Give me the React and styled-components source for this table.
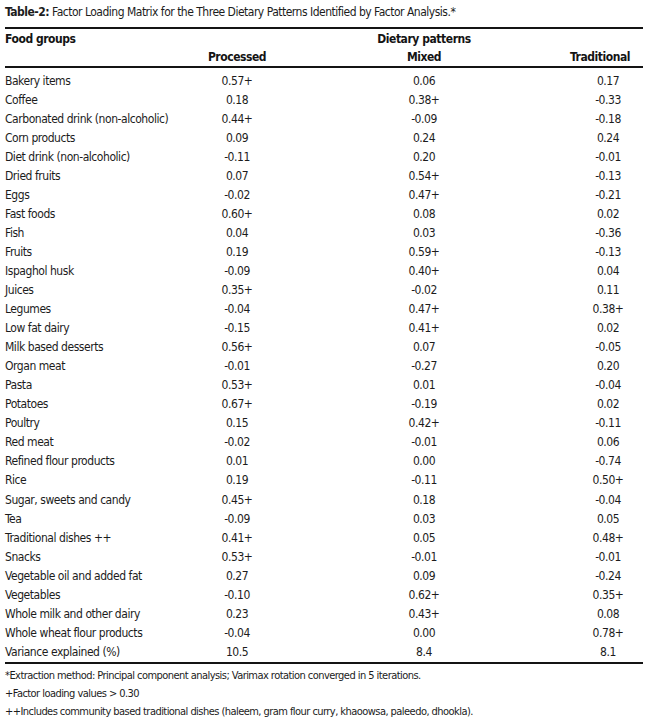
import React from 'react';
import styled, { createGlobalStyle } from 'styled-components';

const GlobalStyle = createGlobalStyle`
  html, body {
    margin: 0;
    padding: 0;
    background: #ffffff;
  }
  body {
    font-family: "DejaVu Sans Condensed", "Liberation Sans", sans-serif;
    color: #1c1c1c;
  }
`;

const rows = [
  ['Bakery items', '0.57+', '0.06', '0.17'],
  ['Coffee', '0.18', '0.38+', '-0.33'],
  ['Carbonated drink (non-alcoholic)', '0.44+', '-0.09', '-0.18'],
  ['Corn products', '0.09', '0.24', '0.24'],
  ['Diet drink (non-alcoholic)', '-0.11', '0.20', '-0.01'],
  ['Dried fruits', '0.07', '0.54+', '-0.13'],
  ['Eggs', '-0.02', '0.47+', '-0.21'],
  ['Fast foods', '0.60+', '0.08', '0.02'],
  ['Fish', '0.04', '0.03', '-0.36'],
  ['Fruits', '0.19', '0.59+', '-0.13'],
  ['Ispaghol husk', '-0.09', '0.40+', '0.04'],
  ['Juices', '0.35+', '-0.02', '0.11'],
  ['Legumes', '-0.04', '0.47+', '0.38+'],
  ['Low fat dairy', '-0.15', '0.41+', '0.02'],
  ['Milk based desserts', '0.56+', '0.07', '-0.05'],
  ['Organ meat', '-0.01', '-0.27', '0.20'],
  ['Pasta', '0.53+', '0.01', '-0.04'],
  ['Potatoes', '0.67+', '-0.19', '0.02'],
  ['Poultry', '0.15', '0.42+', '-0.11'],
  ['Red meat', '-0.02', '-0.01', '0.06'],
  ['Refined flour products', '0.01', '0.00', '-0.74'],
  ['Rice', '0.19', '-0.11', '0.50+'],
  ['Sugar, sweets and candy', '0.45+', '0.18', '-0.04'],
  ['Tea', '-0.09', '0.03', '0.05'],
  ['Traditional dishes ++', '0.41+', '0.05', '0.48+'],
  ['Snacks', '0.53+', '-0.01', '-0.01'],
  ['Vegetable oil and added fat', '0.27', '0.09', '-0.24'],
  ['Vegetables', '-0.10', '0.62+', '0.35+'],
  ['Whole milk and other dairy', '0.23', '0.43+', '0.08'],
  ['Whole wheat flour products', '-0.04', '0.00', '0.78+'],
  ['Variance explained (%)', '10.5', '8.4', '8.1'],
];

const footnotes = [
  '*Extraction method: Principal component analysis; Varimax rotation converged in 5 iterations.',
  '+Factor loading values > 0.30',
  '++Includes community based traditional dishes (haleem, gram flour curry, khaoowsa, paleedo, dhookla).',
];

export default function App() {
  return (
    <>
      <GlobalStyle />
      <Page>
        <Caption>
          <strong>Table-2:</strong> Factor Loading Matrix for the Three Dietary Patterns Identified by Factor Analysis.*
        </Caption>
        <Head>
          <HeadRow>
            <HeadCell>Food groups</HeadCell>
            <HeadCell />
            <HeadCell align="center">Dietary patterns</HeadCell>
            <HeadCell />
          </HeadRow>
          <HeadRow tall>
            <HeadCell />
            <HeadCell align="center">Processed</HeadCell>
            <HeadCell align="center">Mixed</HeadCell>
            <HeadCell align="right">Traditional</HeadCell>
          </HeadRow>
        </Head>
        <Body>
          {rows.map(([food, processed, mixed, traditional]) => (
            <Row key={food}>
              <Food>{food}</Food>
              <Value>{processed}</Value>
              <Value>{mixed}</Value>
              <Value last>{traditional}</Value>
            </Row>
          ))}
        </Body>
        <Notes>
          {footnotes.map(note => (
            <Note key={note}>{note}</Note>
          ))}
        </Notes>
      </Page>
    </>
  );
}

const columns = '175px 114px 260px 89px';

const Page = styled.div`
  width: 638px;
  padding: 0 7px 0 5px;
  font-size: 12px;
  letter-spacing: -0.45px;
`;

const Caption = styled.div`
  height: 27px;
  line-height: 25px;
  white-space: nowrap;
  letter-spacing: -0.5px;

  strong {
    font-weight: 700;
  }
`;

const Head = styled.div`
  border-top: 2px solid #141414;
  border-bottom: 2px solid #141414;
`;

const HeadRow = styled.div`
  display: grid;
  grid-template-columns: ${columns};
  height: ${props => (props.tall ? '20px' : '17px')};
  line-height: ${props => (props.tall ? '20px' : '18px')};
  padding-top: 1px;
  box-sizing: border-box;
  font-weight: 700;
  color: #141414;
`;

const HeadCell = styled.div`
  text-align: ${props => props.align || 'left'};
  padding-right: ${props => (props.align === 'right' ? '13px' : '0')};
  white-space: nowrap;
`;

const Body = styled.div`
  padding-top: 3.5px;
  border-bottom: 2px solid #141414;
`;

const Row = styled.div`
  display: grid;
  grid-template-columns: ${columns};
  height: 19.05px;
  line-height: 19.05px;
`;

const Food = styled.div`
  white-space: nowrap;
`;

const Value = styled.div`
  text-align: center;
  padding-left: ${props => (props.last ? '19px' : '0')};
`;

const Notes = styled.div`
  padding-top: 3px;
  font-size: 11px;
  letter-spacing: -0.55px;
`;

const Note = styled.div`
  height: 17.8px;
  line-height: 17.8px;
  white-space: nowrap;
`;
